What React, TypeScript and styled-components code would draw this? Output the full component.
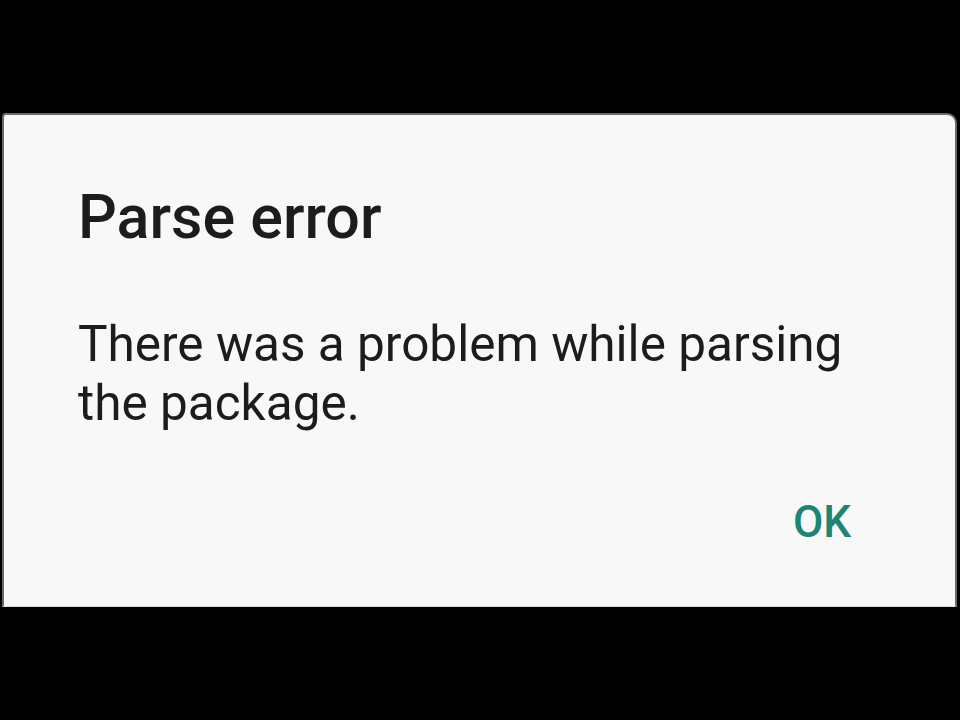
import styled, { createGlobalStyle } from 'styled-components'

const GlobalStyle = createGlobalStyle`
	html, body {
		margin: 0;
		padding: 0;
		background: #000;
	}
	#root {
		width: 960px;
		height: 720px;
		overflow: hidden;
	}
`

const Screen = styled.div`
	width: 960px;
	height: 720px;
	background: #000;
	padding: 113px 3px 0 2px;
	box-sizing: border-box;
`

const Dialog = styled.div`
	height: 494px;
	background: #f8f8f8;
	border: 2px solid #6a6a6a;
	border-bottom: 1px solid #d8d8d8;
	border-top-right-radius: 10px;
	border-top-left-radius: 4px;
	box-sizing: border-box;
	padding: 70px 0 0 74px;
	display: flex;
	flex-direction: column;
	font-family: Roboto, 'Liberation Sans', sans-serif;
`

const Title = styled.div`
	font-size: 61px;
	font-weight: 500;
	color: #1c1c1c;
	line-height: 64px;
`

const Message = styled.div`
	margin-top: 66px;
	font-size: 49.5px;
	font-weight: 400;
	color: #1c1c1c;
	line-height: 59px;
	width: 820px;
`

const Actions = styled.div`
	display: flex;
	justify-content: flex-end;
	margin-top: 65px;
	padding-right: 104px;
`

const TextButton = styled.div`
	font-size: 44px;
	font-weight: 500;
	color: #1d8573;
	line-height: 48px;
`

const App = () => {
	return (
		<Screen>
			<GlobalStyle />
			<Dialog>
				<Title>Parse error</Title>
				<Message>There was a problem while parsing the package.</Message>
				<Actions>
					<TextButton>OK</TextButton>
				</Actions>
			</Dialog>
		</Screen>
	)
}

export default App
